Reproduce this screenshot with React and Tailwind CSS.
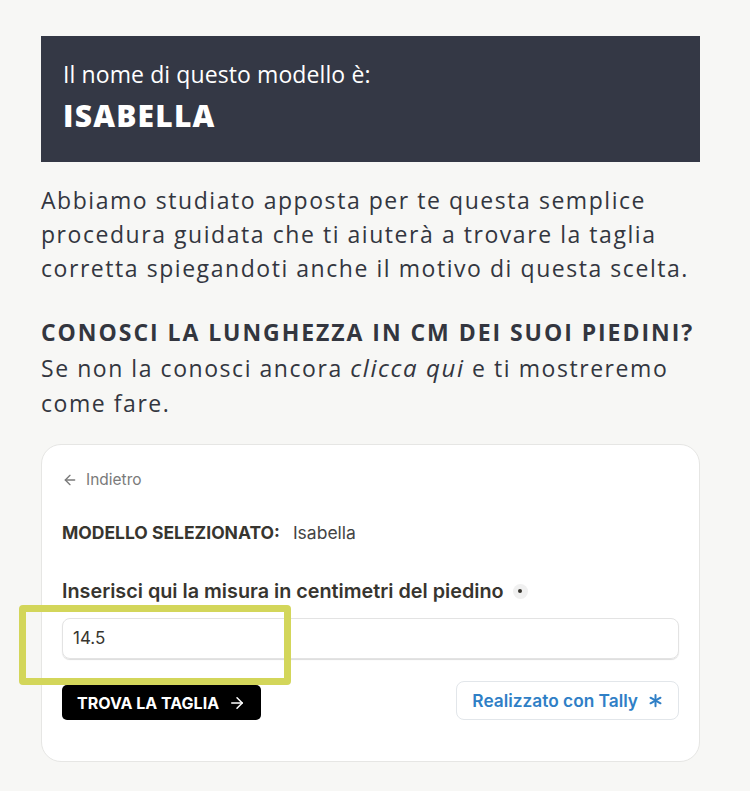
export default function App() {
  return (
    <div className="min-h-[791px] bg-[#f7f7f5] pt-9 px-[41px] pb-8 text-[#33363f]" style={{ fontFamily: "'Open Sans', Lato, sans-serif" }}>
      <div className="w-[659px]">
        <div className="bg-[#343845] px-[22px] pt-[22px] pb-[27px] text-white">
          <p className="text-[23px] leading-[32px] tracking-[0.1px]">Il nome di questo modello è:</p>
          <p className="mt-[7px] text-[30px] font-extrabold leading-[38px] tracking-[1.2px]">ISABELLA</p>
        </div>

        <p className="mt-[21px] text-[23px] leading-[34px] tracking-[1.55px]">
          Abbiamo studiato apposta per te questa semplice procedura guidata che ti aiuterà a trovare la taglia corretta spiegandoti anche il motivo di questa scelta.
        </p>

        <h2 className="mt-[30px] text-[23px] font-bold leading-[35px] tracking-[1.95px]">CONOSCI LA LUNGHEZZA IN CM DEI SUOI PIEDINI?</h2>
        <p className="text-[23px] leading-[35px] tracking-[1.55px]">
          Se non la conosci ancora <em className="text-[24px] tracking-[1.6px]">clicca qui</em> e ti mostreremo come fare.
        </p>

        <div
          className="relative mt-[23px] rounded-[20px] border border-[#e6e6e4] bg-white px-[20px] pt-[23px] pb-[41px]"
          style={{ fontFamily: "Inter, 'Liberation Sans', sans-serif" }}
        >
          <div className="flex items-center gap-[8px] text-[15.5px] text-[#7a7a7a]">
            <svg width="16" height="16" viewBox="0 0 24 24" fill="none" stroke="currentColor" strokeWidth="2" strokeLinecap="round" strokeLinejoin="round">
              <path d="M19 12H5" />
              <path d="M12 19l-7-7 7-7" />
            </svg>
            <span>Indietro</span>
          </div>

          <div className="mt-[29px] flex items-center text-[17.5px] text-[#37352f]">
            <span className="font-bold">MODELLO SELEZIONATO:</span>
            <span className="ml-[13px] text-[#444]">Isabella</span>
          </div>

          <div className="mt-[30px] flex items-center text-[19.8px] font-semibold text-[#37352f]">
            <span>Inserisci qui la misura in centimetri del piedino</span>
            <span className="ml-[9px] flex h-[15px] w-[15px] items-center justify-center rounded-full bg-[#f0f0f0]">
              <span className="h-[4px] w-[4px] rounded-full bg-[#37352f]" />
            </span>
          </div>

          <div className="mt-[12px] flex h-[41px] items-center rounded-[8px] border border-[#e3e3e3] px-[10px] text-[17px] text-[#37352f] shadow-[0_1px_1px_rgba(0,0,0,0.14)]">
            14.5
          </div>

          <div className="mt-[22px] flex items-start justify-between">
            <button className="mt-[4px] flex h-[35px] items-center gap-[9px] rounded-[5px] bg-black px-[15px] text-[16px] font-bold text-white">
              TROVA LA TAGLIA
              <svg width="18" height="18" viewBox="0 0 24 24" fill="none" stroke="currentColor" strokeWidth="2" strokeLinecap="round" strokeLinejoin="round">
                <path d="M5 12h14" />
                <path d="M12 5l7 7-7 7" />
              </svg>
            </button>
            <div className="flex h-[39px] items-center gap-[10px] rounded-[8px] border border-[#e2e6ea] px-[15px] text-[17.3px] font-semibold text-[#2f7fc6]">
              Realizzato con Tally
              <svg width="15" height="15" viewBox="0 0 24 24" fill="none" stroke="currentColor" strokeWidth="3.2" strokeLinecap="round">
                <path d="M12 3v18" />
                <path d="M4 7.5l16 9" />
                <path d="M20 7.5l-16 9" />
              </svg>
            </div>
          </div>

          <div className="absolute left-[-23px] top-[160px] h-[80px] w-[272px] rounded-[4px] border-[7px] border-[#d3d65a]" />
        </div>
      </div>
    </div>
  );
}
